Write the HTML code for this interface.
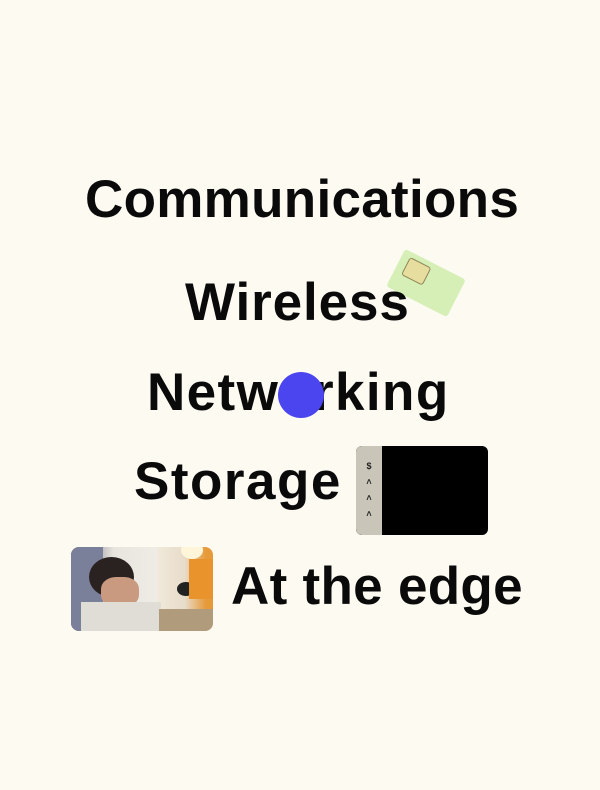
<!DOCTYPE html>
<html><head><meta charset="utf-8"><style>
html,body{margin:0;padding:0}
body{width:600px;height:790px;background:#fdfaf2;position:relative;overflow:hidden;font-family:"Liberation Sans",sans-serif;}
.t{position:absolute;font-weight:bold;font-size:53px;color:#0a0a0a;white-space:nowrap;line-height:1}
</style></head><body>
<div class="t" style="left:85px;top:173px;letter-spacing:0.3px">Communications</div>
<div style="position:absolute;left:392px;top:262px;width:68px;height:42px;background:#d4efb4;border-radius:3px;transform:rotate(27deg);opacity:.95">
  <div style="position:absolute;left:8px;top:5px;width:22px;height:18px;background:#e6dc9a;border:1px solid #8a8050;border-radius:3px"></div>
</div>
<div class="t" style="left:185px;top:276px;letter-spacing:0.9px">Wireless</div>
<div class="t" style="left:147px;top:366px;letter-spacing:1.4px">Netw<span style="opacity:0">o</span>rking</div>
<div style="position:absolute;left:278px;top:372px;width:46px;height:46px;border-radius:50%;background:#4b45f0"></div>
<div class="t" style="left:134px;top:455px;letter-spacing:1.5px">Storage</div>
<div style="position:absolute;left:356px;top:446px;width:132px;height:89px;border-radius:6px;background:#000;overflow:hidden">
  <div style="position:absolute;left:0;top:0;width:26px;height:89px;background:#c9c5b8;border-radius:6px 0 0 6px;font:bold 9px 'Liberation Sans',sans-serif;color:#222;text-align:center;line-height:16px;padding-top:12px;box-sizing:border-box">$<br>˄<br>˄<br>˄</div>
</div>
<div style="position:absolute;left:71px;top:547px;width:142px;height:84px;border-radius:8px;overflow:hidden;background:linear-gradient(90deg,#5a5a70 0%,#e8e4de 30%,#efece6 60%,#f0e8d8 62%,#e8dccb 80%,#e69a3a 95%)">
  <div style="position:absolute;left:0;top:0;width:32px;height:84px;background:#7a7f9a"></div>
  <div style="position:absolute;left:18px;top:10px;width:45px;height:40px;border-radius:50%;background:#2a2220"></div>
  <div style="position:absolute;left:30px;top:30px;width:38px;height:30px;border-radius:40%;background:#c99a80"></div>
  <div style="position:absolute;left:10px;top:55px;width:80px;height:30px;background:#e0ddd6"></div>
  <div style="position:absolute;left:88px;top:62px;width:54px;height:22px;background:#b19b7d"></div>
  <div style="position:absolute;left:106px;top:35px;width:18px;height:14px;border-radius:50%;background:#222"></div>
  <div style="position:absolute;left:118px;top:12px;width:24px;height:40px;background:#e8932c"></div>
  <div style="position:absolute;left:110px;top:-6px;width:22px;height:18px;border-radius:50%;background:#fff6da"></div>
</div>
<div class="t" style="left:231px;top:560px;letter-spacing:0.3px">At the edge</div>
</body></html>
